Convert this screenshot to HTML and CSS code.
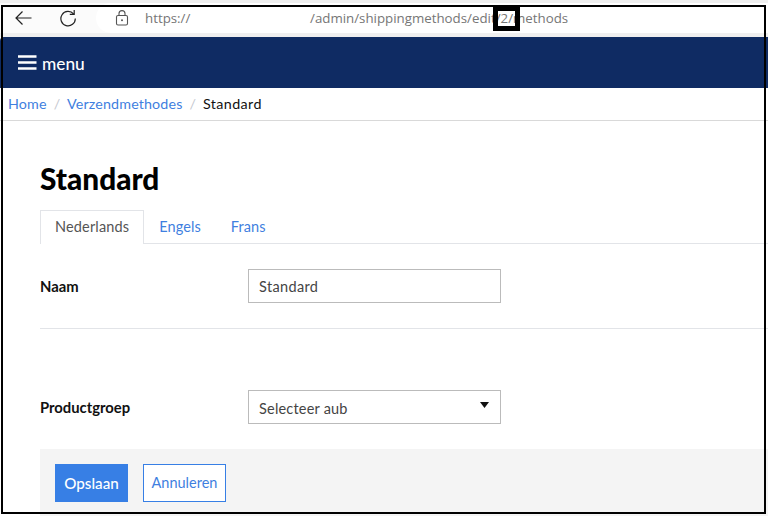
FILE: index.html
```html
<!DOCTYPE html>
<html lang="nl">
<head>
<meta charset="utf-8">
<title>Standard</title>
<link rel="stylesheet" href="styles.css">
</head>
<body>
<div class="browser">
  <svg class="ico back" width="20" height="16" viewBox="0 0 20 16"><path d="M17.5 8H2M8.5 1.500 2 8l6.500 6.500" fill="none" stroke="#222" stroke-width="1.2"/></svg>
  <svg class="ico reload" width="18" height="18" viewBox="0 0 18 18"><path d="M14.600 5A7.200 7.200 0 1 0 16.300 9.500" fill="none" stroke="#222" stroke-width="1.2"/><path d="M15.200 1v4.400h-4.400" fill="none" stroke="#222" stroke-width="1.2"/></svg>
  <div class="address">
    <svg class="lock" width="14" height="16" viewBox="0 0 14 16"><rect x="1.500" y="5.500" width="11" height="9.500" rx="1.500" fill="none" stroke="#555" stroke-width="1.1"/><path d="M4 5.500V3.600a3 3 0 0 1 6 0v1.900" fill="none" stroke="#555" stroke-width="1.1"/><circle cx="7" cy="10.200" r="1" fill="#555"/></svg>
    <span class="scheme">https://</span>
    <span class="path">/admin/shippingmethods/edit/2/methods</span>
  </div>
</div>
<header class="topbar">
  <svg class="burger" width="19" height="15" viewBox="0 0 19 15"><path d="M0 1.500h18.500M0 7.500h18.500M0 13.500h18.500" stroke="#fff" stroke-width="2.4"/></svg>
  <span class="menu-label">menu</span>
</header>
<nav class="crumbs">
  <a class="link">Home</a><span class="sep">/</span><a class="link">Verzendmethodes</a><span class="sep">/</span><span class="current">Standard</span>
</nav>
<main class="content">
  <h1 class="title">Standard</h1>
  <div class="tabs">
    <span class="tab active">Nederlands</span>
    <span class="tab">Engels</span>
    <span class="tab">Frans</span>
  </div>
  <div class="row name-row">
    <label class="label">Naam</label>
    <div class="control">Standard</div>
  </div>
  <hr class="rule">
  <div class="row group-row">
    <label class="label">Productgroep</label>
    <div class="control select">Selecteer aub<svg class="caret" width="9" height="6" viewBox="0 0 9 6"><path d="M0 0h9L4.500 6z" fill="#111"/></svg></div>
  </div>
  <div class="actions">
    <button class="btn primary">Opslaan</button>
    <button class="btn outline">Annuleren</button>
  </div>
</main>
<div class="frame"></div>
<div class="redact"></div>
</body>
</html>
```
FILE: styles.css
```css
* { box-sizing: border-box; }
html, body { margin: 0; height: 516px; overflow: hidden; background: #fff; }
body { font-family: "Lato", "Liberation Sans", sans-serif; color: #111; font-size: 14.5px; position: relative; }

.browser { height: 37px; background: #fbfbfb; display: flex; align-items: center; padding: 0 0 0 14px; border-top: 3px solid #efefef; border-bottom: 4px solid #efefef; }
.ico { flex: none; }
.back { margin-right: 25px; }
.reload { margin-right: 19px; }
.address { flex: 1; height: 30px; background: #fff; border-radius: 15px 0 0 15px; display: flex; align-items: center; padding-left: 19px; font-family: "Open Sans", sans-serif; font-size: 13.3px; color: #767676; }
.lock { margin-right: 16px; }
.scheme { width: 165px; }

.topbar { height: 51px; background: #0f2b63; display: flex; align-items: center; padding: 0 0 1px 18px; border-top-left-radius: 4px; }
.burger { margin-right: 5px; }
.menu-label { color: #fff; font-size: 17.3px; font-weight: 500; padding-top: 2px; }

.crumbs { height: 33px; border-bottom: 1px solid #d9d9d9; padding: 0 0 2px 8px; display: flex; align-items: center; font-size: 14.3px; }
.link { color: #3f7fe0; letter-spacing: .13px; }
.sep { color: #c4c8cf; margin: 0 7px; }
.current { color: #111; letter-spacing: .4px; }

.content { padding: 40px 0 0 40px; }
.title { margin: 0 0 13px; font-size: 29.8px; font-weight: 900; line-height: 36px; color: #000; }
.tabs { display: flex; height: 34px; border-bottom: 1px solid #e2e4e8; }
.tab { height: 34px; padding: 0 14px; line-height: 32px; color: #3f7fe0; border: 1px solid transparent; border-bottom: 0; letter-spacing: .1px; }
.tab.active { color: #555; background: #fff; border-color: #e2e4e8; letter-spacing: .15px; }

.row { display: flex; align-items: center; height: 34px; }
.name-row { margin-top: 25px; }
.label { width: 208px; flex: none; font-weight: 700; color: #111; font-size: 14.8px; padding-bottom: 1px; }
.control { width: 253px; height: 34px; border: 1px solid #bbb; padding: 0 10px; line-height: 33px; color: #444; position: relative; letter-spacing: .35px; }
.select { line-height: 35px; letter-spacing: .2px; }
.caret { position: absolute; right: 11px; top: 11px; }
.rule { margin: 25px 0 0; border: 0; border-top: 1px solid #e2e4e8; }
.group-row { margin-top: 61px; }

.actions { margin-top: 25px; height: 70px; background: #f4f4f4; padding: 15px; display: flex; gap: 15px; align-items: flex-start; }
.btn { height: 38px; font: inherit; padding: 0 0 1px; border: 1px solid #377fe5; }
.primary { width: 73px; background: #377fe5; color: #fff; font-weight: 500; font-size: 15.2px; }
.outline { width: 83px; background: #fff; color: #3f7fe0; font-size: 14.5px; }

.frame { position: absolute; left: 1px; top: 5px; width: 765px; height: 509px; border: 2px solid #000; pointer-events: none; }
.redact { position: absolute; left: 493px; top: 5px; width: 27px; height: 26px; border: 5px solid #000; border-top-width: 6px; pointer-events: none; }
```
